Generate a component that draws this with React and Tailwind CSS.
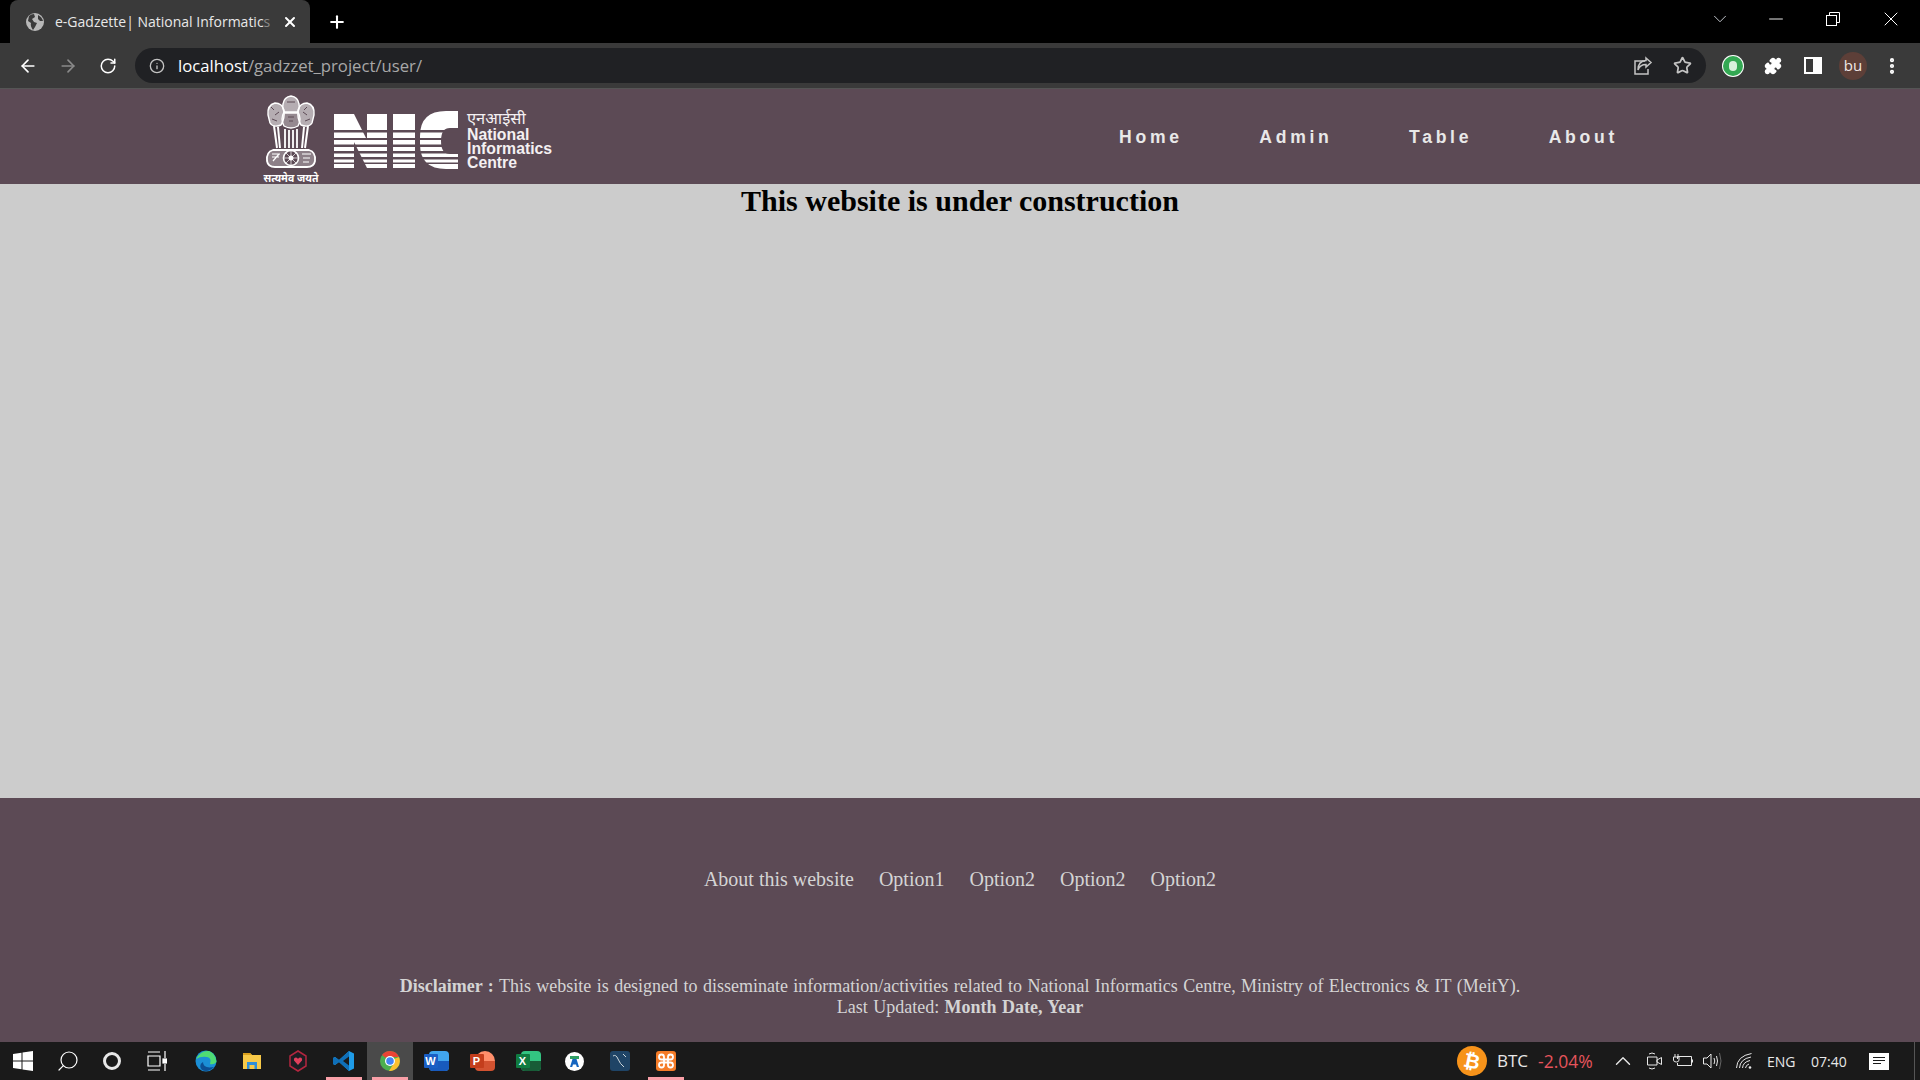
import {
  ArrowLeft,
  ArrowRight,
  RotateCw,
  Info,
  Star,
  Puzzle,
  X,
  Plus,
  ChevronDown,
  ChevronUp,
  Minus,
  Search,
  EllipsisVertical,
} from "lucide-react";

const NicLogo = () => (
  <svg width="124" height="58" viewBox="0 -3 124 58" fill="#fff">
    <path d="M0 0H20L33 26V0H53V54H33L20 28V54H0Z" />
    <rect x="59" y="0" width="22" height="54" />
    <path d="M86 22Q86 -3 112 -3H124V14H116Q107 14 107 27Q107 40 116 40H124V55H112Q86 55 86 30Z" />
    <g fill="#5c4a55">
      <rect x="0" y="16" width="124" height="2.5" />
      <rect x="0" y="24" width="124" height="2" />
      <rect x="0" y="30.5" width="124" height="2.5" />
      <rect x="0" y="37" width="124" height="2.5" />
      <rect x="0" y="43" width="124" height="2.5" />
      <rect x="0" y="48.5" width="124" height="1.5" />
    </g>
  </svg>
);

const Emblem = () => (
  <svg width="52" height="78" viewBox="0 0 52 78" fill="none" stroke="#fff" strokeWidth="1.4">
    {/* lion heads */}
    <path d="M18 9Q19 2 26 1Q33 2 34 9Q35 14 32 18H20Q17 14 18 9Z" fill="#fff" fillOpacity=".55" />
    <path d="M3 20Q2 10 10 8Q17 8 19 15Q20 24 16 30Q8 33 5 28Z" fill="#fff" fillOpacity=".55" />
    <path d="M49 20Q50 10 42 8Q35 8 33 15Q32 24 36 30Q44 33 47 28Z" fill="#fff" fillOpacity=".55" />
    <path d="M19 17H33Q37 24 33 31Q26 35 19 31Q15 24 19 17Z" fill="#fff" fillOpacity=".35" />
    <path d="M6 12L9 15M10 20L14 17M42 12L39 15M42 20L38 17M22 7H30M23 22H29M24 26H28M7 24L12 26M45 24L40 26" strokeWidth="1" stroke="#5c4a55" />
    {/* legs */}
    <path d="M9 31L12 53M13 32L15 53M43 31L40 53M39 32L37 53" strokeWidth="2" />
    <path d="M20 34V53M24 35V53M28 35V53M32 34V53" strokeWidth="1.8" />
    {/* abacus */}
    <path d="M8 55H44Q51 57 50 66Q49 72 42 72H10Q3 72 2 66Q1 57 8 55Z" fill="#fff" fillOpacity=".3" strokeWidth="1.8" />
    <circle cx="26" cy="63" r="7.5" fill="#5c4a55" strokeWidth="1.6" />
    <circle cx="26" cy="63" r="2.5" fill="#fff" stroke="none" />
    <path d="M26 56V70M19 63H33M21 58L31 68M31 58L21 68" strokeWidth=".7" />
    <path d="M7 59H15M7 62H14M8 66L14 59M37 59H46M38 63H45M38 67H44" strokeWidth="1.2" />
  </svg>
);

const GlobeFilled = () => (
  <svg width="18" height="18" viewBox="0 0 18 18">
    <circle cx="9" cy="9" r="9" fill="#b8b8b8" />
    <path d="M3 3Q5 1 8 1L9 4L6 6L8 9L11 10L9 14L7 17Q4 13 5 10L2 8ZM12 2Q16 4 17 8H14L12 6Z" fill="#3a3a3a" />
  </svg>
);

const ShareIcon = () => (
  <svg width="20" height="20" viewBox="0 0 20 20" fill="none" stroke="#c4c4c4" strokeWidth="1.5">
    <path d="M12 5H2V18H15V13" />
    <path d="M13 2L18 6.500L13 11V8.500Q7 8.500 5 14Q5 5 13 4.500Z" />
  </svg>
);

const WinControls = () => (
  <div className="ml-auto mr-[17px] flex items-center gap-[33px] pb-[6px] text-white">
    <ChevronDown size={22} strokeWidth={1} className="text-gray-300" />
    <div className="flex w-[24px] justify-center">
      <Minus size={22} strokeWidth={1} />
    </div>
    <div className="flex w-[24px] justify-center">
      <svg width="14" height="14" viewBox="0 0 14 14" fill="none" stroke="#fff">
        <rect x="0.5" y="3.5" width="10" height="10" />
        <path d="M3.5 3V0.5H13.5V10.5H11" />
      </svg>
    </div>
    <div className="ml-[1px] flex w-[24px] justify-center">
      <X size={24} strokeWidth={1} />
    </div>
  </div>
);

const TabStrip = () => (
  <div className="flex h-[43px] items-center bg-black">
    <div className="ml-[10px] flex h-[43px] w-[300px] items-center rounded-t-lg bg-[#3a3a3a] pl-[16px]">
      <GlobeFilled />
      <span className="ml-[11px] w-[215px] whitespace-nowrap text-[14px] text-[#e8e8e8]">
        e-Gadzette| National Informatic<span className="text-[#8a8a8a]">s</span>
      </span>
      <X size={16} strokeWidth={3} className="ml-[12px] text-white" />
    </div>
    <Plus size={20} strokeWidth={2.5} className="ml-[17px] text-white" />
    <WinControls />
  </div>
);

const Toolbar = () => (
  <div className="flex h-[46px] items-center border-b border-[#555] bg-[#3a3a3a]">
    <ArrowLeft size={20} className="ml-[18px] text-white" />
    <ArrowRight size={20} className="ml-[20px] text-[#8a8a8a]" />
    <RotateCw size={18} className="ml-[21px] text-white" />
    <div className="ml-[18px] flex h-[35px] w-[1571px] items-center rounded-full bg-[#202124] pl-[14px]">
      <Info size={16} className="text-[#c4c4c4]" />
      <span className="ml-[13px] text-[16.7px] text-white">
        localhost<span className="text-[#a8a8a8]">/gadzzet_project/user/</span>
      </span>
      <div className="ml-auto">
        <ShareIcon />
      </div>
      <Star size={19} strokeWidth={2.2} className="ml-[20px] mr-[14px] text-[#c4c4c4]" />
    </div>
    <div className="ml-[17px] flex h-[20px] w-[20px] items-center justify-center rounded-full bg-[#34a853] ring-1 ring-white">
      <div className="h-[10px] w-[8px] rounded-full bg-[#d8f0dc]" />
    </div>
    <Puzzle size={18} fill="#fff" className="ml-[21px] text-white" />
    <div className="ml-[22px] flex h-[17px] w-[18px] border-2 border-white">
      <div className="ml-auto h-full w-[7px] bg-white" />
    </div>
    <div className="ml-[17px] flex h-[28px] w-[28px] items-center justify-center rounded-full bg-[#5d3f38] text-[15px] text-[#f0e8e6]">
      bu
    </div>
    <EllipsisVertical size={20} strokeWidth={3} className="ml-[15px] text-white" />
  </div>
);

const Navbar = () => (
  <header className="flex h-[95px] bg-[#5c4a55]">
    <div className="ml-[261px] flex w-[60px] flex-col items-center pt-[6px]">
      <Emblem />
      <span className="-mt-[1px] whitespace-nowrap font-['Noto_Sans'] text-[10.5px] font-bold leading-[12px] text-white">
        सत्यमेव जयते
      </span>
    </div>
    <div className="ml-[13px] pt-[22px]">
      <NicLogo />
    </div>
    <div className="ml-[9px] pt-[19px] font-['Liberation_Sans'] text-[15.8px] font-bold leading-[14px] text-[#f4f0f2]">
      <div className="h-[20px] font-['Noto_Sans'] text-[16.5px] font-normal leading-[20px]">एनआईसी</div>
      <div>National</div>
      <div>Informatics</div>
      <div>Centre</div>
    </div>
    <nav className="ml-auto mr-[302px] flex gap-[76.5px] pt-[38px] font-['Liberation_Sans'] text-[17.6px] font-bold leading-[20px] tracking-[3.7px] text-[#e8e8e8]">
      <a>Home</a>
      <a>Admin</a>
      <a>Table</a>
      <a>About</a>
    </nav>
  </header>
);

const Footer = () => (
  <footer className="h-[244px] bg-[#5c4a55] pt-[69px] text-center font-['Liberation_Serif'] text-[#d4d4d4]">
    <div className="flex justify-center gap-[25px] text-[20px] leading-[24px]">
      <a>About this website</a>
      <a>Option1</a>
      <a>Option2</a>
      <a>Option2</a>
      <a>Option2</a>
    </div>
    <p className="mt-[85px] text-[18px] leading-[21px] [word-spacing:0.9px]">
      <b>Disclaimer :</b> This website is designed to disseminate information/activities related to National Informatics Centre, Ministry of Electronics &amp; IT (MeitY).
      <br />
      Last Updated: <b>Month Date, Year</b>
    </p>
  </footer>
);

const TaskIcon = ({ active, open, children }) => (
  <div className={`relative flex h-[38px] w-[46px] items-center justify-center ${active ? "bg-[#4a4a4a]" : ""}`}>
    {children}
    {open && <div className="absolute bottom-0 left-[5px] right-[5px] h-[3px] bg-[#f9a0a8]" />}
  </div>
);

const OfficeIcon = ({ letter, back, mid, front, round }) => (
  <div className={`relative h-[20px] w-[20px] ${round ? "rounded-full" : "rounded-sm"}`} style={{ backgroundColor: back }}>
    <div className="absolute bottom-0 left-0 h-[10px] w-full rounded-b-sm" style={{ backgroundColor: mid }} />
    <div
      className="absolute left-[-5px] top-[3px] flex h-[14px] w-[14px] items-center justify-center rounded-[1px] font-['Liberation_Sans'] text-[11px] font-bold text-white"
      style={{ backgroundColor: front }}
    >
      {letter}
    </div>
  </div>
);

const Taskbar = () => (
  <div className="flex h-[38px] items-center bg-[#1a1a1a] text-white">
    <div className="flex h-full w-[45px] items-center justify-center">
      <svg width="20" height="20" viewBox="0 0 20 20" fill="#fff">
        <path d="M0 3L8.500 1.800V9.500H0ZM9.500 1.600L20 0V9.500H9.500ZM0 10.500H8.500V18.200L0 17ZM9.500 10.500H20V20L9.500 18.400Z" />
      </svg>
    </div>
    <div className="flex h-full w-[45px] items-center justify-center">
      <Search size={24} strokeWidth={1.2} className="-scale-x-100" />
    </div>
    <div className="flex h-full w-[44px] items-center justify-center">
      <div className="h-[18px] w-[18px] rounded-full border-[3px] border-[#e8e8e8]" />
    </div>
    <div className="mr-[4px] flex h-full w-[45px] items-center justify-center">
      <svg width="20" height="20" viewBox="0 0 20 20" fill="none" stroke="#fff" strokeWidth="1.2">
        <path d="M1 1H13M1 19H13M1 5H13V15H1ZM18 0V7M18 13V20" />
        <rect x="16" y="8" width="4" height="4" fill="#fff" />
      </svg>
    </div>
    <TaskIcon>
      <svg width="22" height="22" viewBox="0 0 22 22">
        <circle cx="11" cy="11" r="10.500" fill="#1b8fd6" />
        <path d="M1 9Q6 0 14 1Q21 4 21.500 12Q19 15 15 14Q17 8 12 7Q6 6 1 9Z" fill="#4fdc74" />
        <path d="M8 12Q8 19 19 17Q13 23 7 20Q3 15 8 12Z" fill="#0c4f94" />
      </svg>
    </TaskIcon>
    <TaskIcon>
      <svg width="20" height="20" viewBox="0 0 20 20">
        <path d="M1 2H8L10 4H19V18H1Z" fill="#f7c948" />
        <path d="M1 2H8L10 4H1Z" fill="#d99f1c" />
        <path d="M5 18V11H15V18H12.500V14H7.500V18Z" fill="#2f8fd8" />
      </svg>
    </TaskIcon>
    <TaskIcon>
      <svg width="18" height="22" viewBox="0 0 18 22" fill="none">
        <path d="M9 1L17 6V16L9 21L1 16V6Z" stroke="#b3263f" strokeWidth="1.500" fill="#1d1d23" />
        <path d="M9 15L5 10.500Q4.500 7.500 7 7.500Q8.500 7.500 9 9Q9.500 7.500 11 7.500Q13.500 7.500 13 10.500Z" fill="#e0405c" />
      </svg>
    </TaskIcon>
    <TaskIcon open>
      <svg width="22" height="22" viewBox="0 0 22 22">
        <path d="M16 1L21 3.500V18.500L16 21L6 12L2 15L0 14V8L2 7L6 10Z" fill="#1f9ce8" />
        <path d="M16 1L6 10L2 7L0 8V14L2 15L6 12L16 21Z" fill="#0f6fb8" />
        <path d="M16 6.500L10 11L16 15.500Z" fill="#1a1a1a" />
      </svg>
    </TaskIcon>
    <TaskIcon active open>
      <svg width="22" height="22" viewBox="0 0 22 22">
        <circle cx="11" cy="11" r="10" fill="#4caf50" />
        <path d="M11 1A10 10 0 0 1 20 7H11A4 4 0 0 0 7 8L3 5A10 10 0 0 1 11 1Z" fill="#ea4335" />
        <path d="M20 7A10 10 0 0 1 10 21L15 13A4 4 0 0 0 15 9Z" fill="#fbc02d" />
        <circle cx="11" cy="11" r="5" fill="#fff" />
        <circle cx="11" cy="11" r="3.800" fill="#4285f4" />
      </svg>
    </TaskIcon>
    <TaskIcon>
      <div className="ml-[5px]">
        <OfficeIcon letter="W" back="#41a5ee" mid="#185abd" front="#1a5ec4" />
      </div>
    </TaskIcon>
    <TaskIcon>
      <div className="ml-[5px]">
        <OfficeIcon letter="P" back="#ff8f6b" mid="#d35230" front="#c43e1c" round />
      </div>
    </TaskIcon>
    <TaskIcon>
      <div className="ml-[5px]">
        <OfficeIcon letter="X" back="#33c481" mid="#185c37" front="#107c41" />
      </div>
    </TaskIcon>
    <TaskIcon>
      <svg width="19" height="19" viewBox="0 0 19 19">
        <circle cx="9.500" cy="9.500" r="9.500" fill="#fff" />
        <rect x="5" y="4" width="9" height="3" fill="#2f9e63" />
        <path d="M5 15L7.500 7H11.500L14 15H11.800L11 12.500H8L7.200 15Z" fill="#1565c0" />
      </svg>
    </TaskIcon>
    <TaskIcon>
      <svg width="20" height="20" viewBox="0 0 20 20" fill="none">
        <rect width="20" height="20" rx="3" fill="#1f4466" />
        <path d="M3 5Q6 3 8 8T14 16M13 3L16 6" stroke="#cfd8dc" strokeWidth="1" />
      </svg>
    </TaskIcon>
    <TaskIcon open>
      <svg width="20" height="20" viewBox="0 0 20 20" fill="none">
        <rect width="20" height="20" rx="3" fill="#f57c28" />
        <path d="M8 8V6A2.500 2.500 0 1 0 5.500 8.500H14.500A2.500 2.500 0 1 0 12 6V14A2.500 2.500 0 1 0 14.500 11.500H5.500A2.500 2.500 0 1 0 8 14Z" stroke="#fff" strokeWidth="1.800" />
      </svg>
    </TaskIcon>
    <div className="ml-auto flex h-full items-center font-['Open_Sans'] text-[#e8e8e8]">
      <div className="flex h-[30px] w-[30px] rotate-12 items-center justify-center rounded-full bg-[#f7931a] font-['Liberation_Sans'] text-[20px] font-bold text-white">
        ₿
      </div>
      <span className="ml-[10px] w-[30px] whitespace-nowrap text-[17px]">BTC</span>
      <span className="ml-[11px] w-[54px] whitespace-nowrap text-[17.5px] text-[#e5545c]">-2.04%</span>
      <ChevronUp size={26} strokeWidth={1.3} className="ml-[18px]" />
      <svg width="15" height="20" viewBox="0 0 15 20" fill="none" stroke="#e8e8e8" className="ml-[11px]">
        <path d="M0.500 6H10V14H0.500ZM10 9L14.500 6.500V13.500L10 11ZM2 3Q5 1 8 3M2 17Q5 19 8 17" />
      </svg>
      <svg width="20" height="14" viewBox="0 0 20 14" fill="none" stroke="#e8e8e8" className="ml-[11px]">
        <path d="M4.500 2.500H18.500V11.500H4.500V9M4.500 5V2.500M2 0V3M5 0V3M0.500 3H6V6Q6 8 3.300 8Q0.500 8 0.500 6ZM19.500 5.500V8.500" />
      </svg>
      <svg width="19" height="18" viewBox="0 0 19 18" fill="none" stroke="#e8e8e8" className="ml-[10px]">
        <path d="M0.500 6H4L8 2V16L4 12H0.500Z" />
        <path d="M11 6Q12.500 9 11 12M13.500 4Q15.500 9 13.500 14" />
        <path d="M16.500 1Q19.500 9 16.500 17" stroke="#666" />
      </svg>
      <svg width="16" height="16" viewBox="0 0 16 16" fill="none" stroke="#e8e8e8" className="ml-[14px]">
        <path d="M0.500 15Q1 3 15.500 0.500M3.500 15Q4 6 15 4M6.500 15Q7 9 14 7.500M9.500 15Q10 12 13 11" />
        <circle cx="14" cy="14.500" r="1.300" fill="#e8e8e8" stroke="none" />
      </svg>
      <span className="ml-[15px] w-[27px] whitespace-nowrap text-[14px]">ENG</span>
      <span className="ml-[17px] w-[35px] whitespace-nowrap text-[14px]">07:40</span>
      <div className="ml-[23px] h-[17px] w-[20px] bg-white p-[4px]">
        <div className="h-[1px] bg-[#1a1a1a]" />
        <div className="mt-[2px] h-[1px] bg-[#1a1a1a]" />
        <div className="mt-[2px] h-[1px] w-[8px] bg-[#1a1a1a]" />
      </div>
      <div className="ml-[25px] h-full w-[6px] border-l border-[#555]" />
    </div>
  </div>
);

const App = () => {
  return (
    <div className="flex h-[1080px] flex-col overflow-hidden bg-[#ccc] font-['Open_Sans']">
      <TabStrip />
      <Toolbar />
      <Navbar />
      <main className="h-[614px] text-center font-['Liberation_Serif'] text-[30px] font-bold leading-[34px] text-black">
        <h2>This website is under construction</h2>
      </main>
      <Footer />
      <Taskbar />
    </div>
  );
};

export default App;
